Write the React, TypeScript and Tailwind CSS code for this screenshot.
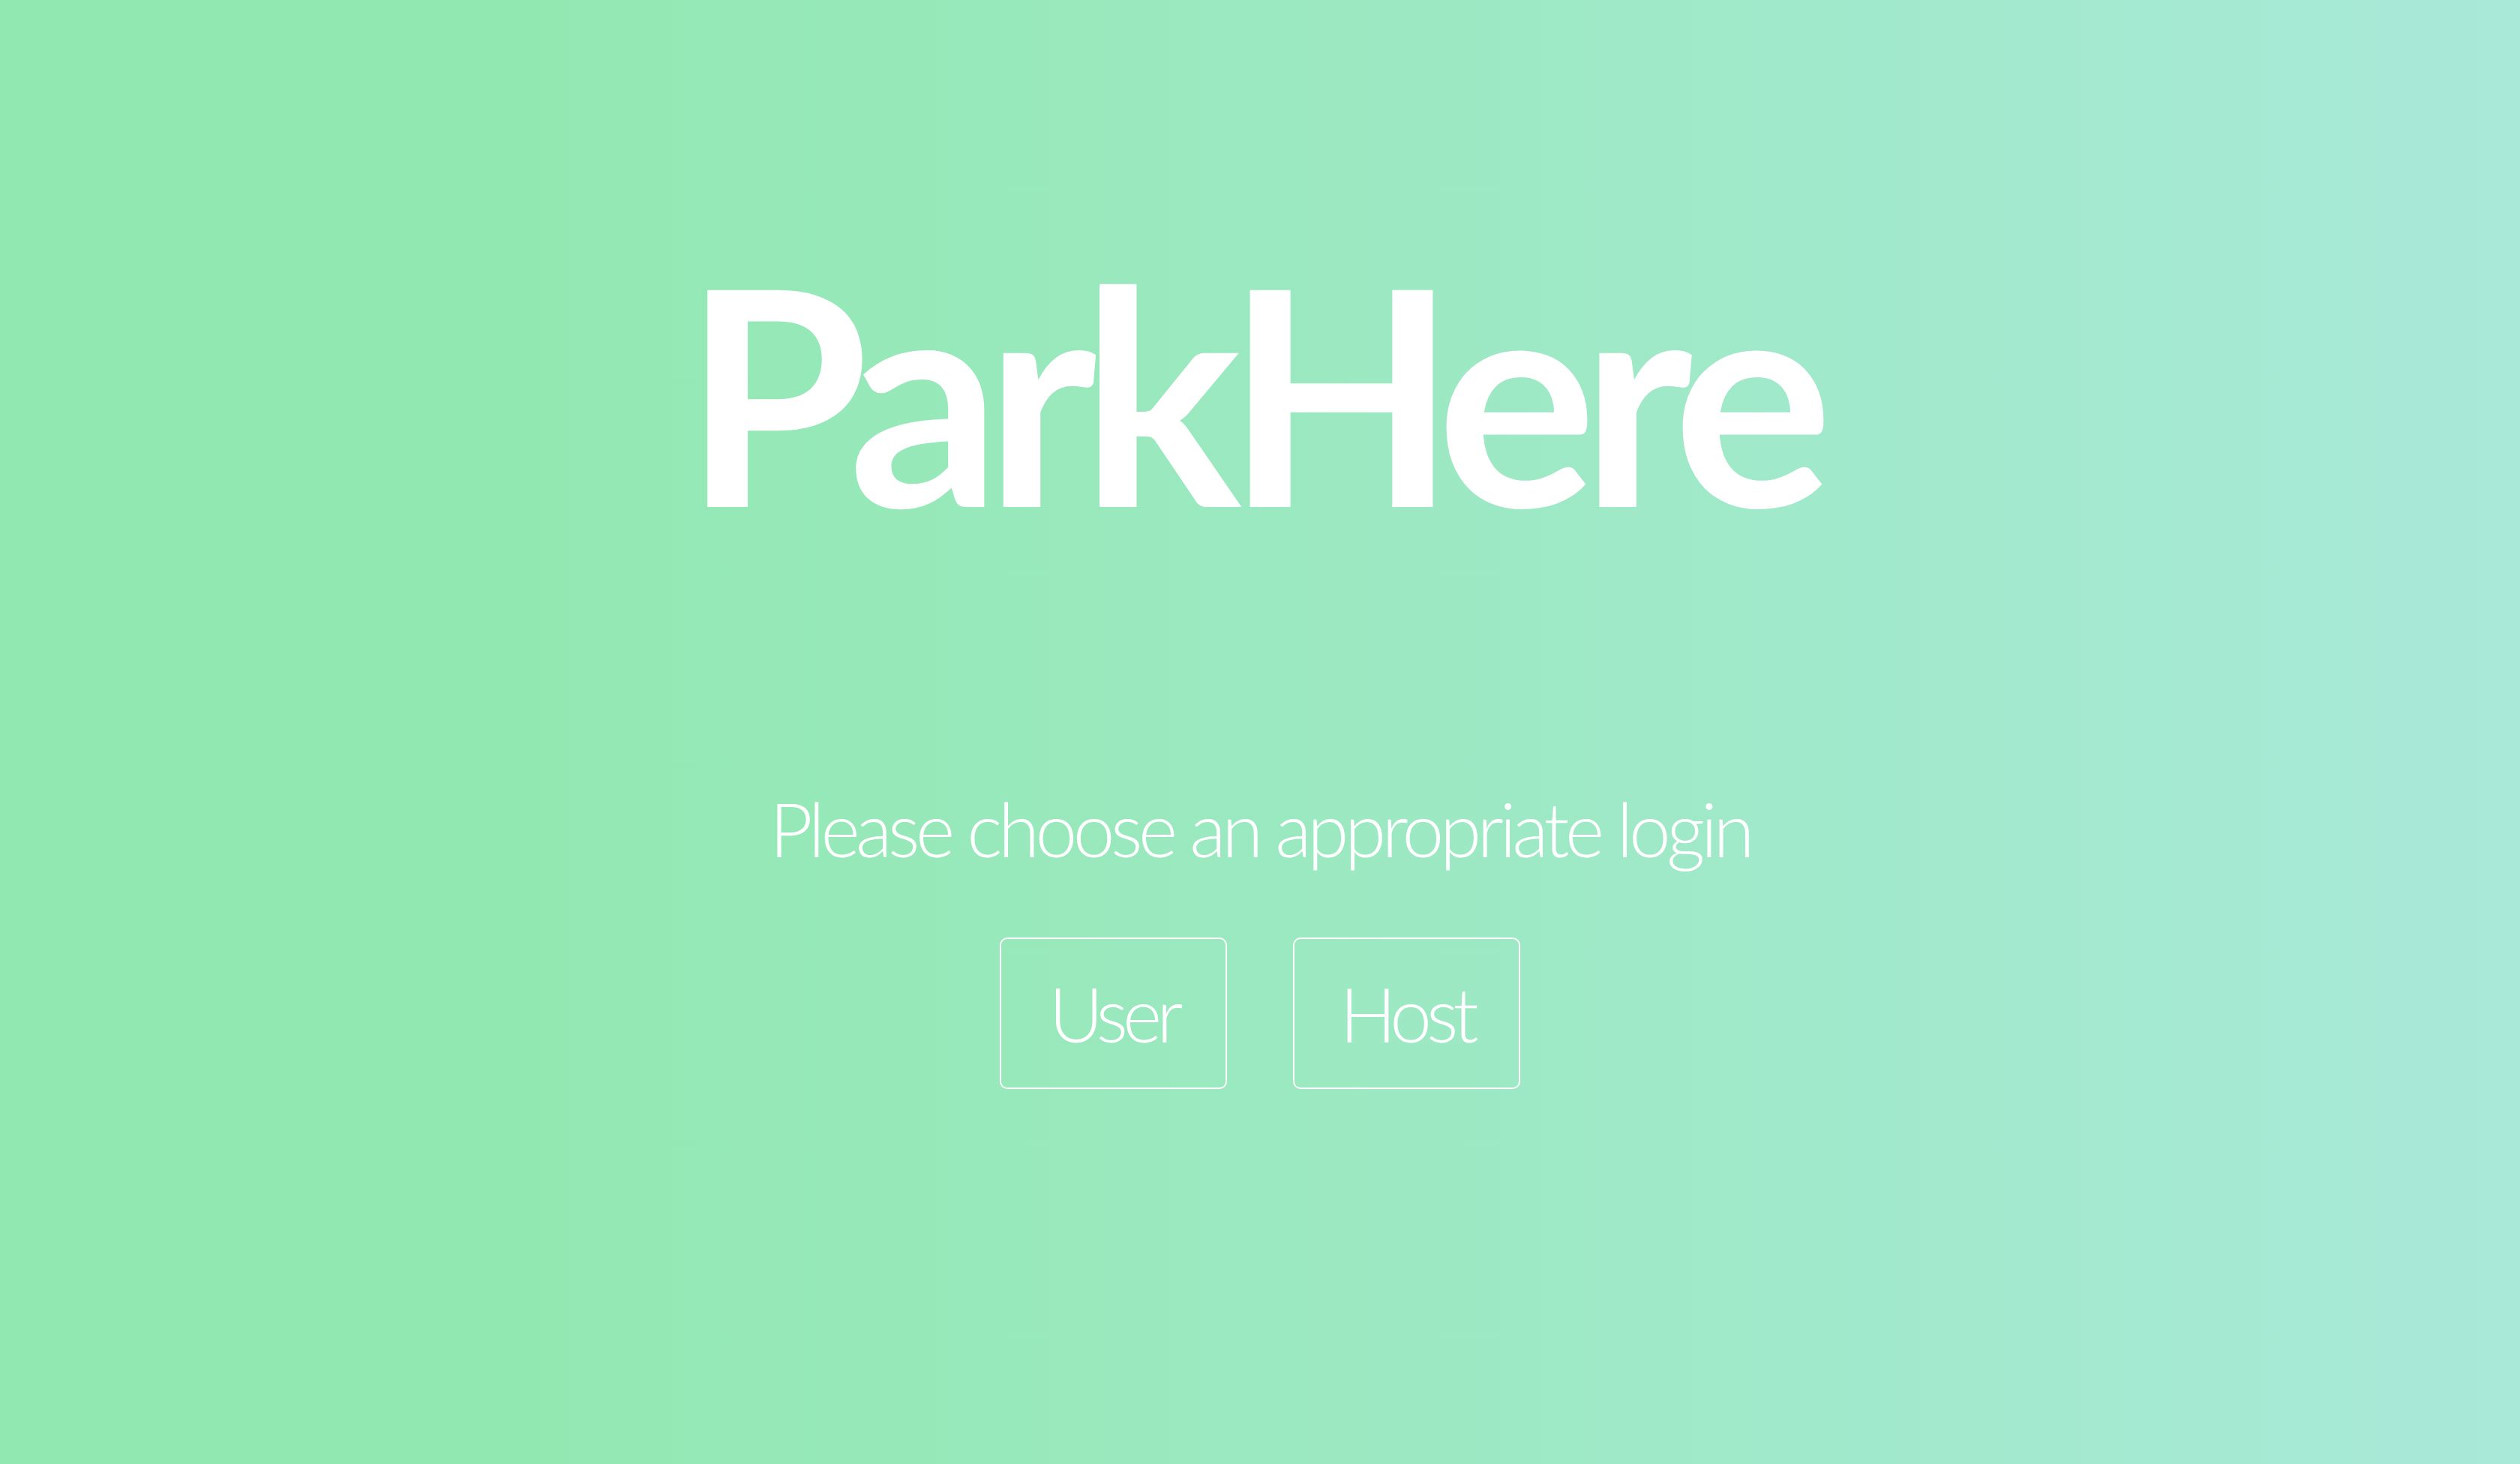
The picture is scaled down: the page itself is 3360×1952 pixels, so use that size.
export default function App() {
  return (
    <div className="flex h-[1952px] w-full flex-col items-center bg-gradient-to-r from-[#92e8b1] from-20% to-[#a8e9d8] text-white">
      <h1 className="mt-[321px] mr-[26px] font-['Lato',sans-serif] text-[400px] font-bold leading-none tracking-[-21px]">
        ParkHere
      </h1>
      <p className="mt-[333px] font-['Lato',sans-serif] text-[100px] font-light leading-none tracking-[-5.5px]">
        Please choose an appropriate login
      </p>
      <div className="mt-[96px] flex gap-[88px]">
        <button className="flex h-[202px] w-[303px] items-center justify-center rounded-[10px] border-2 border-white font-['Lato',sans-serif] text-[100px] font-light leading-none tracking-[-7px] text-white">
          User
        </button>
        <button className="flex h-[202px] w-[303px] items-center justify-center rounded-[10px] border-2 border-white font-['Lato',sans-serif] text-[100px] font-light leading-none tracking-[-7px] text-white">
          Host
        </button>
      </div>
    </div>
  );
}
